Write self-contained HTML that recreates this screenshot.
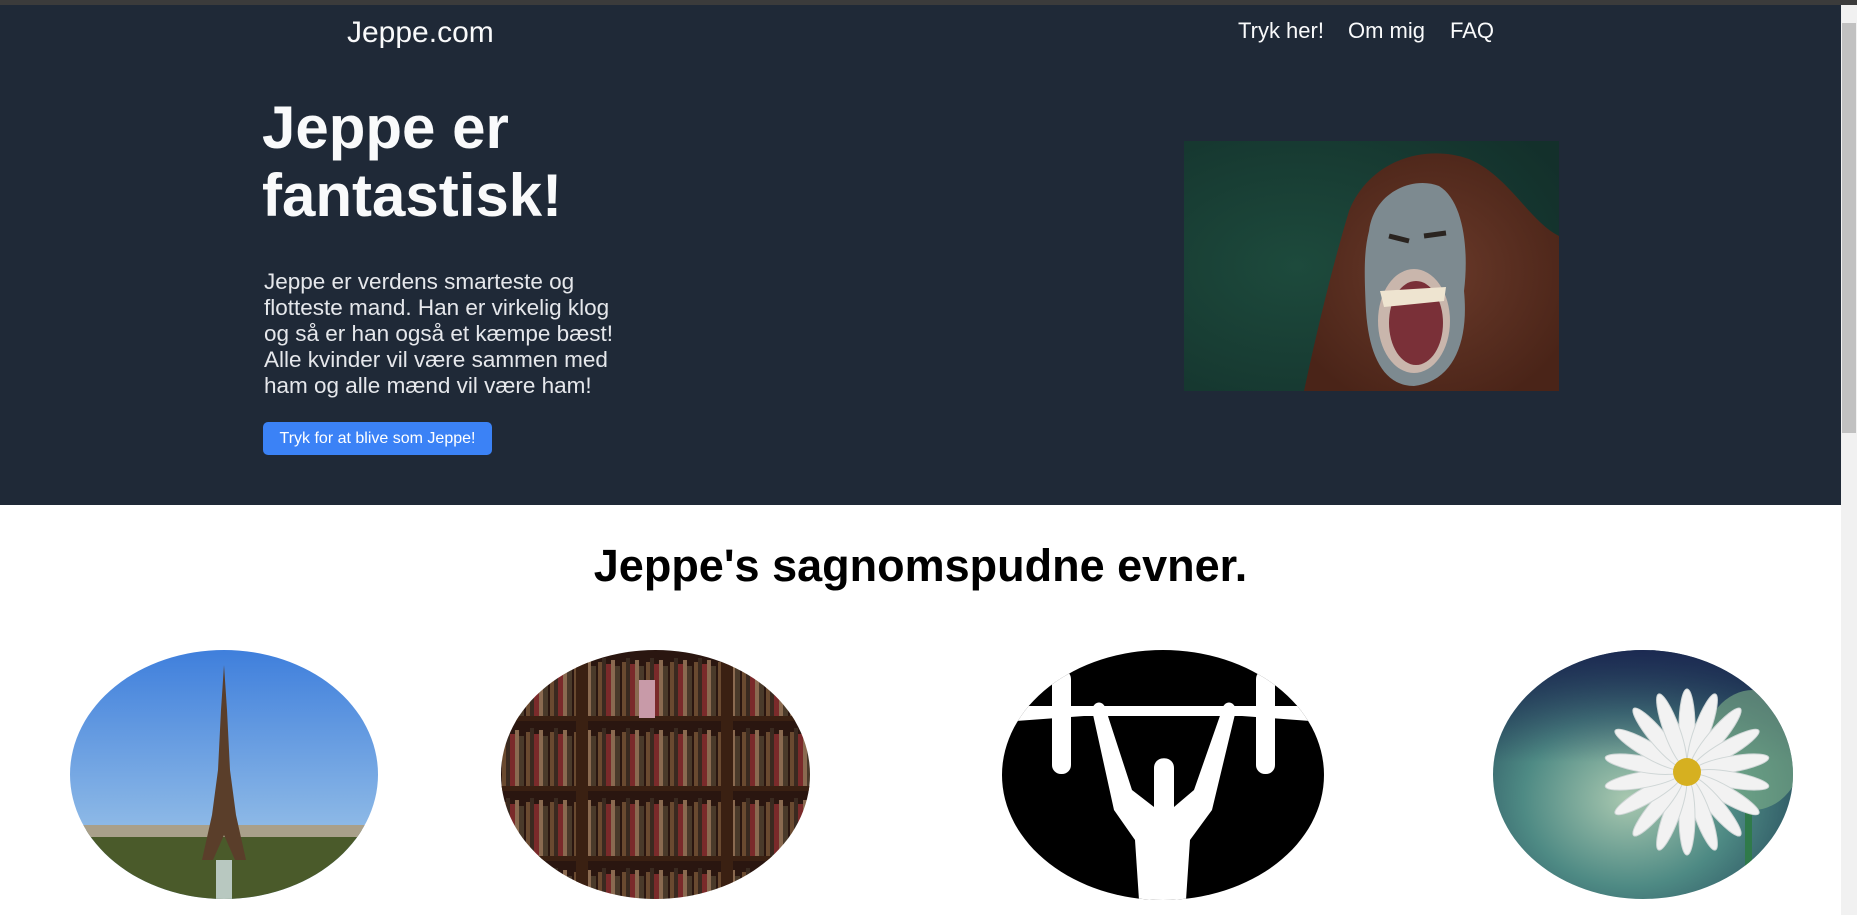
<!DOCTYPE html>
<html><head><meta charset="utf-8"><style>
*{margin:0;padding:0;box-sizing:border-box}
html,body{width:1857px;height:915px;overflow:hidden;background:#fff;font-family:"Liberation Sans",Arial,sans-serif}
.top{position:absolute;left:0;top:0;width:1857px;height:5px;background:#3b3b3b}
.hero{position:absolute;left:0;top:5px;width:1841px;height:500px;background:#1f2937;color:#f9fafb}
.abs{position:absolute;white-space:nowrap}
.sb{position:absolute;left:1841px;top:5px;width:16px;height:910px;background:#f1f1f1}
.thumb{position:absolute;left:1842px;top:23px;width:14px;height:410px;background:#c1c1c1}
</style></head><body>
<div class="top"></div>
<div class="hero">
  <div class="abs" style="left:347px;top:11px;font-size:30px;line-height:34px">Jeppe.com</div>
  <div class="abs" style="left:1238px;top:13px;font-size:22px;line-height:26px">Tryk her!</div>
  <div class="abs" style="left:1348px;top:13px;font-size:22px;line-height:26px">Om mig</div>
  <div class="abs" style="left:1450px;top:13px;font-size:22px;line-height:26px">FAQ</div>
  <div class="abs" style="left:262px;top:89px;font-size:60px;line-height:68px;font-weight:bold">Jeppe er<br>fantastisk!</div>
  <div class="abs" style="left:264px;top:264px;font-size:22.5px;line-height:26px;color:#e5e7eb">Jeppe er verdens smarteste og<br>flotteste mand. Han er virkelig klog<br>og så er han også et kæmpe bæst!<br>Alle kvinder vil være sammen med<br>ham og alle mænd vil være ham!</div>
  <div class="abs" style="left:263px;top:417px;width:229px;height:33px;background:#3b82f6;border-radius:5px;color:#fff;font-size:16px;line-height:33px;text-align:center">Tryk for at blive som Jeppe!</div>
  <svg class="abs" style="left:1184px;top:136px" width="375" height="250" viewBox="0 0 375 250">
    <defs><radialGradient id="bg" cx="0.3" cy="0.5" r="0.8"><stop offset="0" stop-color="#1d4a3c"/><stop offset="1" stop-color="#13302b"/></radialGradient>
    <radialGradient id="hair" cx="0.5" cy="0.5" r="0.6"><stop offset="0" stop-color="#6a3a2a"/><stop offset="1" stop-color="#4a2418"/></radialGradient></defs>
    <rect width="375" height="250" fill="url(#bg)"/>
    <path d="M120 250 C135 180 150 120 165 70 C185 20 240 2 285 18 C325 35 345 80 375 95 L375 250 Z" fill="url(#hair)"/>
    <path d="M185 90 C190 50 230 35 255 45 C280 60 285 110 280 150 C285 200 270 240 230 245 C200 245 185 215 182 170 C180 130 180 110 185 90 Z" fill="#7d8a90"/>
    <ellipse cx="230" cy="180" rx="36" ry="52" fill="#c9b6ac"/>
    <ellipse cx="232" cy="182" rx="27" ry="42" fill="#7a3038"/>
    <path d="M196 150 L262 146 L260 160 L200 166 Z" fill="#eee4d0"/>
    <path d="M205 95 L225 100 M240 95 L262 92" stroke="#2a2420" stroke-width="5"/>
  </svg>
</div>
<div class="abs" style="left:0;top:540px;width:1841px;text-align:center;font-size:45px;font-weight:bold;line-height:52px;color:#000">Jeppe's sagnomspudne evner.</div>

<svg class="abs" style="left:70px;top:650px" width="308" height="249" viewBox="0 0 308 249">
  <defs><clipPath id="c1"><ellipse cx="154" cy="124.5" rx="154" ry="124.5"/></clipPath>
  <linearGradient id="sky" x1="0" y1="0" x2="0" y2="1"><stop offset="0" stop-color="#3f7fdc"/><stop offset="0.7" stop-color="#8cb8e6"/></linearGradient></defs>
  <g clip-path="url(#c1)">
    <rect width="308" height="249" fill="url(#sky)"/>
    <rect y="180" width="308" height="69" fill="#4a5a2a"/>
    <rect y="175" width="308" height="12" fill="#a9a08a"/>
    <path d="M154 15 L157 60 L160 120 L166 165 L176 210 L165 210 L154 185 L143 210 L132 210 L142 165 L148 120 L151 60 Z" fill="#5a3e2a"/>
    <rect x="146" y="210" width="16" height="39" fill="#b8c8c0"/>
  </g>
</svg>

<svg class="abs" style="left:501px;top:650px" width="309" height="249" viewBox="0 0 309 249">
  <defs><clipPath id="c2"><ellipse cx="154.5" cy="124.5" rx="154.5" ry="124.5"/></clipPath>
  <pattern id="bk" width="24" height="70" patternUnits="userSpaceOnUse">
    <rect width="24" height="70" fill="#2a1610"/>
    <rect x="1" y="12" width="4" height="56" fill="#6a4a30"/><rect x="5" y="8" width="4" height="60" fill="#3a2a20"/>
    <rect x="9" y="14" width="5" height="54" fill="#7a2a2a"/><rect x="14" y="10" width="4" height="58" fill="#8a6a50"/>
    <rect x="18" y="16" width="5" height="52" fill="#4a3a2a"/>
  </pattern></defs>
  <g clip-path="url(#c2)">
    <rect width="309" height="249" fill="url(#bk)"/>
    <rect x="75" width="12" height="249" fill="#3a2012"/>
    <rect x="220" width="12" height="249" fill="#3a2012"/>
    <rect y="66" width="309" height="5" fill="#3a2012"/><rect y="136" width="309" height="5" fill="#3a2012"/><rect y="206" width="309" height="5" fill="#3a2012"/>
    <rect x="138" y="30" width="16" height="38" fill="#c89aa8"/>
  </g>
</svg>

<svg class="abs" style="left:1002px;top:650px" width="322" height="250" viewBox="0 0 322 250">
  <defs><clipPath id="c3"><ellipse cx="161" cy="125" rx="161" ry="125"/></clipPath></defs>
  <g clip-path="url(#c3)">
    <rect width="322" height="250" fill="#000"/>
    <path d="M0 56 L322 56 L322 72 L240 66 L82 66 L0 72 Z" fill="#fff"/>
    <rect x="50" y="20" width="19" height="104" rx="9" fill="#fff"/>
    <rect x="254" y="20" width="19" height="104" rx="9" fill="#fff"/>
    <path d="M90 60 C92 50 102 50 104 60 L130 140 L152 157 L152 118 C152 105 172 105 172 118 L172 157 L192 140 L220 60 C222 50 232 50 234 60 L210 160 L188 190 L184 250 L137 250 L133 190 L112 160 Z" fill="#fff"/>
  </g>
</svg>

<svg class="abs" style="left:1493px;top:650px" width="300" height="249" viewBox="0 0 300 249">
  <defs><clipPath id="c4"><ellipse cx="150" cy="124.5" rx="150" ry="124.5"/></clipPath>
  <radialGradient id="fl" cx="0.45" cy="0.6" r="0.7"><stop offset="0" stop-color="#a9c8b0"/><stop offset="0.5" stop-color="#4e8a84"/><stop offset="1" stop-color="#1e3e54"/></radialGradient>
  <linearGradient id="tp" x1="0" y1="0" x2="0" y2="1"><stop offset="0" stop-color="#1a2550" stop-opacity="0.9"/><stop offset="0.45" stop-color="#1a2550" stop-opacity="0"/></linearGradient></defs>
  <g clip-path="url(#c4)">
    <rect width="300" height="249" fill="url(#fl)"/>
    <rect width="300" height="249" fill="url(#tp)"/>
    <ellipse cx="260" cy="100" rx="50" ry="60" fill="#7fb088" opacity="0.6"/>
    <rect x="252" y="160" width="7" height="90" fill="#2f7a4a"/>
    <g fill="#f2f2f2" stroke="#cfd6d6" stroke-width="1" transform="translate(194 122)">
      <ellipse cx="0" cy="-45" rx="8" ry="38" transform="rotate(0)"/>
      <ellipse cx="0" cy="-45" rx="8" ry="38" transform="rotate(20)"/>
      <ellipse cx="0" cy="-45" rx="8" ry="38" transform="rotate(40)"/>
      <ellipse cx="0" cy="-45" rx="8" ry="38" transform="rotate(60)"/>
      <ellipse cx="0" cy="-45" rx="8" ry="38" transform="rotate(80)"/>
      <ellipse cx="0" cy="-45" rx="8" ry="38" transform="rotate(100)"/>
      <ellipse cx="0" cy="-45" rx="8" ry="38" transform="rotate(120)"/>
      <ellipse cx="0" cy="-45" rx="8" ry="38" transform="rotate(140)"/>
      <ellipse cx="0" cy="-45" rx="8" ry="38" transform="rotate(160)"/>
      <ellipse cx="0" cy="-45" rx="8" ry="38" transform="rotate(180)"/>
      <ellipse cx="0" cy="-45" rx="8" ry="38" transform="rotate(200)"/>
      <ellipse cx="0" cy="-45" rx="8" ry="38" transform="rotate(220)"/>
      <ellipse cx="0" cy="-45" rx="8" ry="38" transform="rotate(240)"/>
      <ellipse cx="0" cy="-45" rx="8" ry="38" transform="rotate(260)"/>
      <ellipse cx="0" cy="-45" rx="8" ry="38" transform="rotate(280)"/>
      <ellipse cx="0" cy="-45" rx="8" ry="38" transform="rotate(300)"/>
      <ellipse cx="0" cy="-45" rx="8" ry="38" transform="rotate(320)"/>
      <ellipse cx="0" cy="-45" rx="8" ry="38" transform="rotate(340)"/>
    </g>
    <circle cx="194" cy="122" r="14" fill="#d6b020"/>
  </g>
</svg>

<div class="sb"></div>
<div class="thumb"></div>
</body></html>
